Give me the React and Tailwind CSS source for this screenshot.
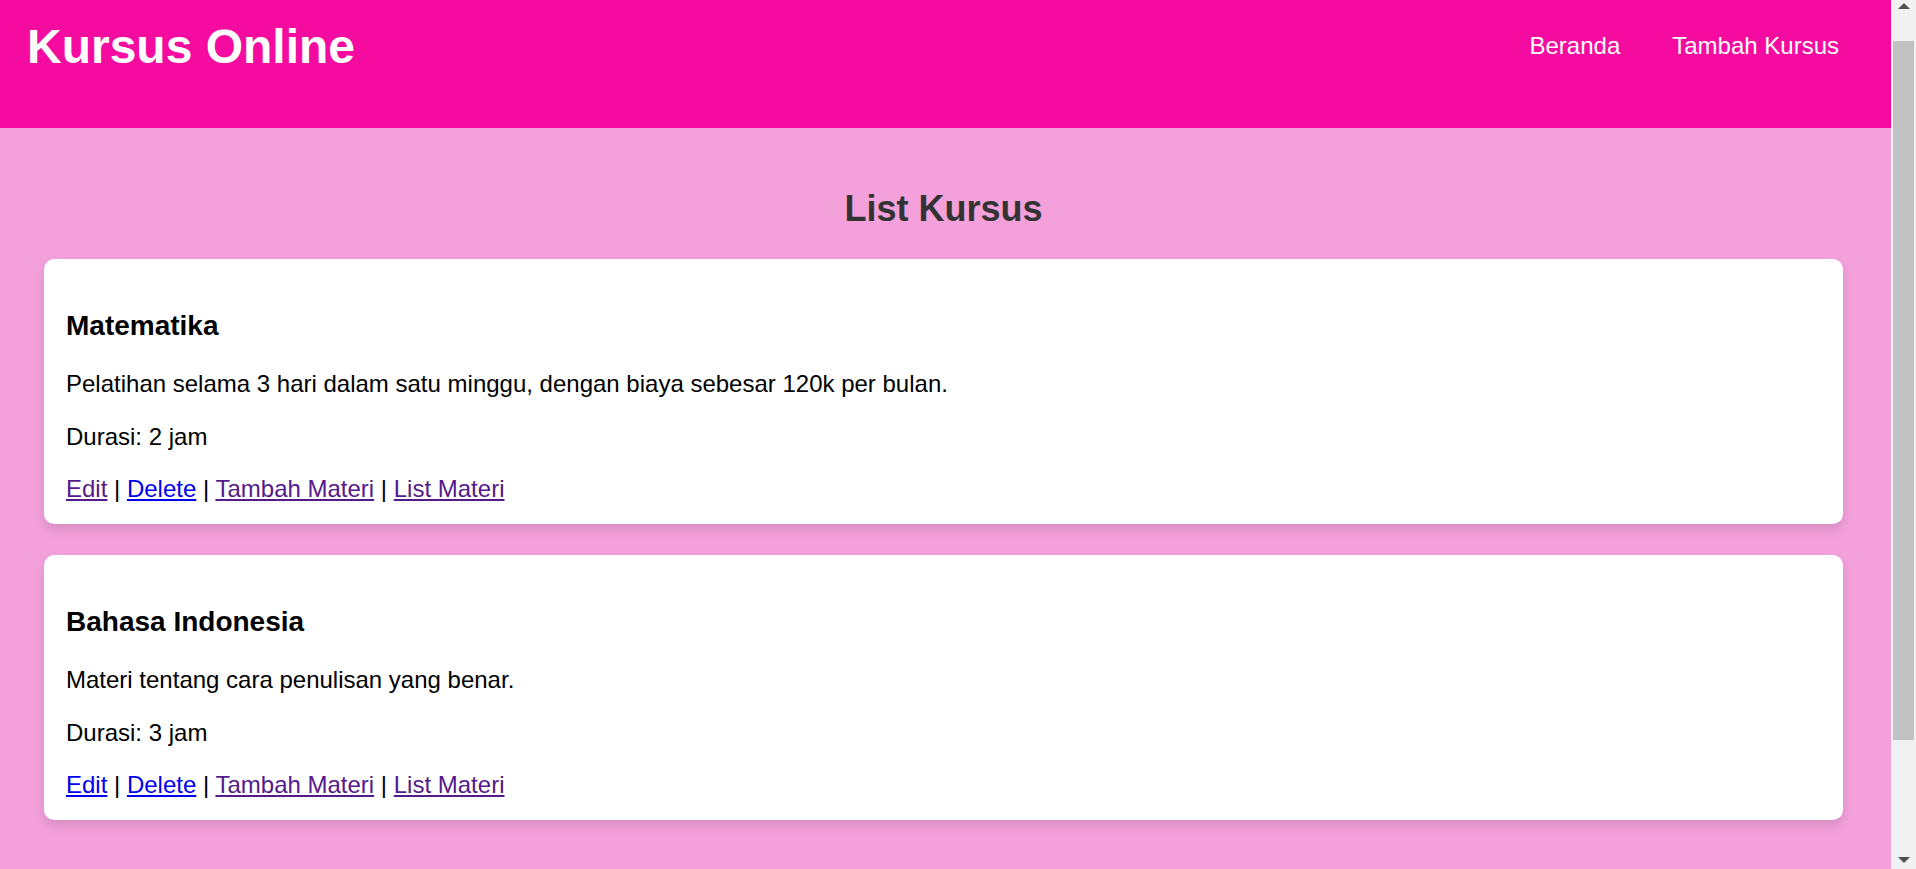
import React from "react";

const courses = [
  {
    title: "Matematika",
    desc: "Pelatihan selama 3 hari dalam satu minggu, dengan biaya sebesar 120k per bulan.",
    durasi: "Durasi: 2 jam",
    editVisited: true,
  },
  {
    title: "Bahasa Indonesia",
    desc: "Materi tentang cara penulisan yang benar.",
    durasi: "Durasi: 3 jam",
    editVisited: false,
  },
];

function Card({ c }) {
  return (
    <div className="bg-white rounded-[10px] shadow-[0_6px_12px_rgba(0,0,0,0.12)] pt-[23px] pb-[21px] px-[22px] text-black">
      <h3 className="mt-[28px] text-[28px] leading-[32px] font-bold">{c.title}</h3>
      <p className="mt-[28px] text-[24px] leading-[28px]">{c.desc}</p>
      <p className="mt-[25px] text-[24px] leading-[28px]">{c.durasi}</p>
      <div className="mt-[24px] text-[24px] leading-[28px]">
        <a href="#" className={`underline ${c.editVisited ? "text-[#551A8B]" : "text-[#0000EE]"}`}>Edit</a>
        {" | "}
        <a href="#" className="underline text-[#0000EE]">Delete</a>
        {" | "}
        <a href="#" className="underline text-[#551A8B]">Tambah Materi</a>
        {" | "}
        <a href="#" className="underline text-[#551A8B]">List Materi</a>
      </div>
    </div>
  );
}

export default function App() {
  return (
    <div className="flex h-[869px] w-full overflow-hidden font-['Liberation_Sans',Arial,sans-serif]">
      <div className="flex-1 min-w-0 overflow-hidden bg-[#F4A1DB]">
        <header className="h-[128px] bg-[#F50BA0] flex justify-between items-start pl-[27px] pr-[52px]">
          <h1 className="mt-[19px] text-[48px] leading-[55px] font-bold text-white">Kursus Online</h1>
          <nav className="mt-[32px] flex gap-[52px] text-[24px] leading-[28px] text-white">
            <a href="#">Beranda</a>
            <a href="#">Tambah Kursus</a>
          </nav>
        </header>
        <main className="pl-[44px] pr-[48px]">
          <h2 className="mt-[60px] text-center text-[36px] leading-[41px] font-bold text-[#333333]">List Kursus</h2>
          <div className="mt-[30px] flex flex-col gap-[31px]">
            {courses.map((c) => (
              <Card key={c.title} c={c} />
            ))}
          </div>
        </main>
      </div>
      <div className="w-[25px] h-full bg-[#F1F1F1] flex flex-col">
        <div className="h-[41px] flex justify-center pt-[3px]">
          <svg width="12" height="7" viewBox="0 0 12 7">
            <polygon points="6,0 12,6 0,6" fill="#505050" />
          </svg>
        </div>
        <div className="mx-[2px] h-[699px] bg-[#C1C1C1]" />
        <div className="flex-1 flex items-end justify-center pb-[5px]">
          <svg width="12" height="7" viewBox="0 0 12 7">
            <polygon points="0,0 12,0 6,6" fill="#505050" />
          </svg>
        </div>
      </div>
    </div>
  );
}
